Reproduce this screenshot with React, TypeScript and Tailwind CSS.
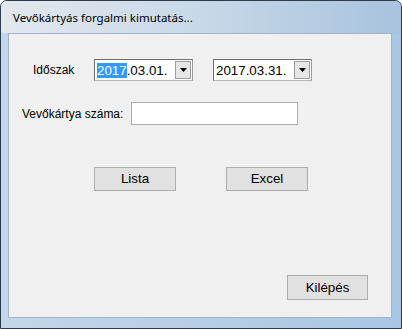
import React from "react";

function Combo({ value, selected }: { value: string; selected?: string }) {
  const rest = selected ? value.slice(selected.length) : value;
  return (
    <div className="flex h-[22px] w-[99px] items-center border border-t-[#6d6d6d] border-l-[#6d6d6d] border-r-[#9a9a9a] border-b-[#b5b5b5] bg-white pl-[2px] pr-[1px]">
      <div className="flex flex-1 items-center text-[13.33px] leading-[15px] text-black">
        {selected ? (
          <span className="bg-[#3399ff] text-white">{selected}</span>
        ) : null}
        <span>{rest}</span>
      </div>
      <div className="flex h-[18px] w-[16px] items-center justify-center border border-[#9c9c9c] bg-[#e6e6e6]">
        <svg width="7" height="4" viewBox="0 0 7 4">
          <path d="M0 0 H7 L3.5 4 Z" fill="#000" />
        </svg>
      </div>
    </div>
  );
}

function Btn({ label, w, h }: { label: string; w: string; h: string }) {
  return (
    <div
      className={`flex items-center justify-center border border-[#adadad] bg-[#e1e1e1] text-[13.33px] text-black ${w} ${h}`}
    >
      {label}
    </div>
  );
}

export default function App() {
  return (
    <div
      className="h-[329px] w-[402px] bg-white"
      style={{ fontFamily: '"Liberation Sans", Arial, sans-serif' }}
    >
      <div className="flex h-[329px] w-[402px] flex-col overflow-hidden rounded-t-[7px] border border-[#2e3b48] bg-[#b9cfe6]">
        {/* title bar */}
        <div className="flex h-[32px] items-center bg-gradient-to-r from-[#e3e8ee] via-[#c8d8e8] to-[#a8c3de] pl-[12px] pt-[1px]">
          <span
            className="text-[11.5px] text-black"
            style={{ fontFamily: '"Noto Sans", "Open Sans", sans-serif' }}
          >
            Vevőkártyás forgalmi kimutatás...
          </span>
        </div>
        {/* body */}
        <div className="flex flex-1 bg-gradient-to-r from-[#c4d6e9] to-[#a9c6e3]">
          <div className="w-[7px]" />
          <div className="flex flex-1 flex-col pb-[10px]">
            <div className="flex h-[285px] flex-col border border-[#9fb4ca] bg-[#f0f0f0]">
              {/* row 1 */}
              <div className="mt-[25px] flex items-center pl-[24px]">
                <div className="w-[61px] text-[12px] text-black">Időszak</div>
                <Combo value="2017.03.01." selected="2017" />
                <div className="ml-[20px]">
                  <Combo value="2017.03.31." />
                </div>
              </div>
              {/* row 2 */}
              <div className="mt-[21px] flex items-center pl-[13px]">
                <div className="w-[109px] text-[12px] text-black">Vevőkártya száma:</div>
                <div className="h-[23px] w-[167px] border border-[#abadb3] bg-white" />
              </div>
              {/* row 3 */}
              <div className="mt-[42px] flex items-center gap-[50px] pl-[85px]">
                <Btn label="Lista" w="w-[82px]" h="h-[24px]" />
                <Btn label="Excel" w="w-[82px]" h="h-[24px]" />
              </div>
              {/* row 4 */}
              <div className="mt-[84px] flex pl-[278px]">
                <Btn label="Kilépés" w="w-[81px]" h="h-[25px]" />
              </div>
            </div>
          </div>
          <div className="w-[9px]" />
        </div>
      </div>
    </div>
  );
}
